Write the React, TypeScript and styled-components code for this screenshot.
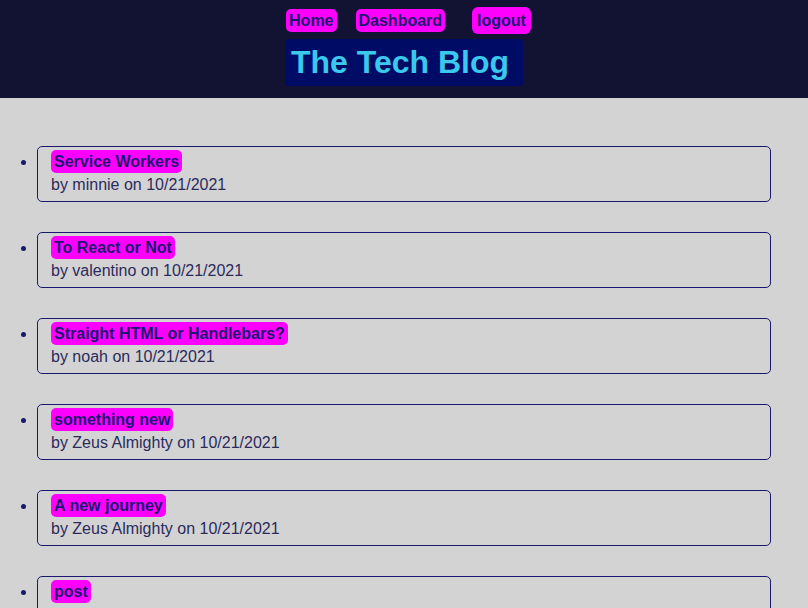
import React from "react";
import styled, { createGlobalStyle } from "styled-components";

const GlobalStyle = createGlobalStyle`
  html, body {
    margin: 0;
    padding: 0;
    background: #d3d3d3;
    font-family: "Liberation Sans", Arial, sans-serif;
    color: #191970;
  }
`;

const Header = styled.header`
  background: #121233;
  display: flex;
  flex-direction: column;
  align-items: center;
  padding: 7px 0 12px;
  gap: 5px;
`;

const Nav = styled.nav`
  display: flex;
  align-items: center;
  justify-content: center;
  align-self: stretch;
  padding-left: 9px;
`;

const NavLink = styled.a<{ $pad?: number; $space?: number; $radius?: number }>`
  display: inline-block;
  background: #ff00ff;
  color: #191970;
  font-weight: bold;
  font-size: 16px;
  line-height: 19px;
  padding: ${(p) => p.$pad ?? 2}px ${(p) => (p.$pad ? 5 : 3)}px;
  border-radius: ${(p) => p.$radius ?? 5}px;
  text-decoration: none;
  margin-right: ${(p) => p.$space ?? 0}px;
  cursor: pointer;
`;

const Title = styled.h1`
  margin: 0;
  background: #000b66;
  color: #3ac8ec;
  font-size: 32px;
  font-weight: bold;
  line-height: 37px;
  padding: 5px 14px 5px 6px;
  border-radius: 4px;
`;

const PostList = styled.ul`
  margin: 0;
  padding: 18px 37px 0;
  list-style: disc;
  color: #191970;
`;

const PostItem = styled.li`
  margin-top: 30px;
`;

const Card = styled.div`
  border: 1px solid #191970;
  border-radius: 5px;
  padding: 3px 13px 7px;
  display: flex;
  flex-direction: column;
  align-items: flex-start;
  gap: 3px;
`;

const PostTitle = styled.a`
  display: inline-block;
  background: #ff00ff;
  color: #191970;
  font-weight: bold;
  font-size: 16px;
  line-height: 19px;
  padding: 2px 3px;
  border-radius: 5px;
  text-decoration: none;
`;

const Meta = styled.p`
  margin: 0;
  font-size: 16px;
  line-height: 18px;
  color: #2b2b5c;
`;

const posts = [
  { title: "Service Workers", author: "minnie", date: "10/21/2021" },
  { title: "To React or Not", author: "valentino", date: "10/21/2021" },
  { title: "Straight HTML or Handlebars?", author: "noah", date: "10/21/2021" },
  { title: "something new", author: "Zeus Almighty", date: "10/21/2021" },
  { title: "A new journey", author: "Zeus Almighty", date: "10/21/2021" },
  { title: "post", author: "Zeus Almighty", date: "10/21/2021" },
];

export default function App() {
  return (
    <>
      <GlobalStyle />
      <Header>
        <Nav>
          <NavLink $space={19}>Home</NavLink>
          <NavLink $space={27}>Dashboard</NavLink>
          <NavLink $pad={4} $radius={6}>logout</NavLink>
        </Nav>
        <Title>The Tech Blog</Title>
      </Header>
      <PostList>
        {posts.map((p) => (
          <PostItem key={p.title}>
            <Card>
              <PostTitle>{p.title}</PostTitle>
              <Meta>
                by {p.author} on {p.date}
              </Meta>
            </Card>
          </PostItem>
        ))}
      </PostList>
    </>
  );
}
